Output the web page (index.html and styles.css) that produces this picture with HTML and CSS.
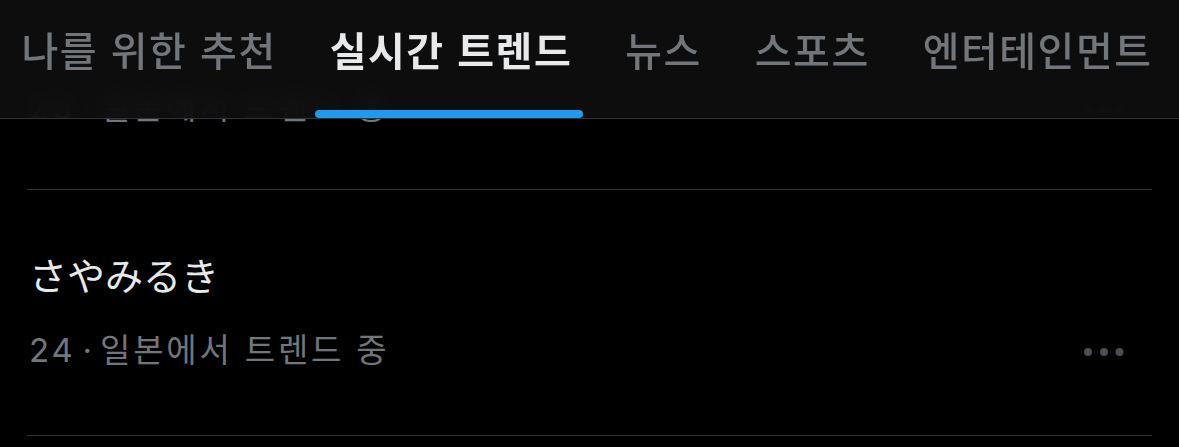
FILE: index.html
```html
<!DOCTYPE html>
<html lang="ko">
<head>
  <meta charset="UTF-8">
  <title>실시간 트렌드</title>
  <link rel="stylesheet" href="styles.css">
</head>
<body>
  <div class="tabs">
    <a class="tab" href="#"><span class="tab-label">나를 위한 추천</span></a>
    <a class="tab active" href="#"><span class="tab-label">실시간 트렌드</span></a>
    <a class="tab" href="#"><span class="tab-label">뉴스</span></a>
    <a class="tab" href="#"><span class="tab-label">스포츠</span></a>
    <a class="tab" href="#"><span class="tab-label">엔터테인먼트</span></a>
  </div>

  <div class="trend-list">
    <!-- scrolled up under the tab bar -->
    <div class="trend first">
      <div class="trend-title">&nbsp;</div>
      <div class="trend-meta">
        <span>23<span class="sep">·</span>일본에서 트렌드 중</span>
        <svg class="more" viewBox="0 0 44 44"><circle cx="6" cy="24" r="4"/><circle cx="22" cy="24" r="4"/><circle cx="37.5" cy="24" r="4"/></svg>
      </div>
    </div>
    <div class="trend">
      <div class="trend-title">さやみるき</div>
      <div class="trend-meta">
        <span>24<span class="sep">·</span>일본에서 트렌드 중</span>
        <svg class="more" viewBox="0 0 44 44"><circle cx="6" cy="24" r="4"/><circle cx="22" cy="24" r="4"/><circle cx="37.5" cy="24" r="4"/></svg>
      </div>
    </div>
  </div>
</body>
</html>
```

FILE: styles.css
```css
body {
  margin: 0;
  background-color: #000;
  font-family: "Inter", "Noto Sans CJK KR", sans-serif;
  overflow: hidden;
}
.tabs {
  position: absolute;
  top: 0;
  left: 0;
  right: 0;
  z-index: 2;
  display: flex;
  height: 118px;
  margin-left: -5px;
  background-color: rgba(14, 14, 16, 0.9);
  backdrop-filter: blur(10px);
  border-bottom: 1px solid #2f3336;
  white-space: nowrap;
}
.tab {
  display: block;
  box-sizing: border-box;
  height: 118px;
  padding: 29px 26.5px 0;
  color: #71767b;
  text-decoration: none;
  font-family: "Noto Sans CJK KR", sans-serif;
  font-size: 40px;
  font-weight: 500;
  line-height: 40px;
  letter-spacing: 1.5px;
}
.tab-label {
  position: relative;
  display: block;
  height: 89px;
}
.tab.active {
  color: #e7e9ea;
  font-weight: 600;
}
.tab.active .tab-label::after {
  content: "";
  position: absolute;
  left: -15px;
  right: -11px;
  bottom: 0;
  height: 8px;
  border-radius: 4px;
  background-color: #1d9bf0;
}
.trend-list {
  margin-top: -53px;
  padding: 0 27px;
}
.trend {
  padding: 60px 0 63px 2px;
  border-bottom: 1px solid #2f3336;
}
.trend.first {
  padding-bottom: 60px;
}
.trend-title {
  font-family: "Noto Sans CJK JP", sans-serif;
  font-size: 38px;
  line-height: 48px;
  color: #e7e9ea;
}
.trend-meta {
  display: flex;
  justify-content: space-between;
  margin-top: 30px;
  font-size: 33px;
  line-height: 44px;
  letter-spacing: 2.8px;
  color: #71767b;
}
.sep {
  margin: 0 8px 0 7px;
  letter-spacing: 0;
}
.more {
  width: 44px;
  height: 44px;
  margin-right: 26px;
  fill: #4a4e52;
}
```
